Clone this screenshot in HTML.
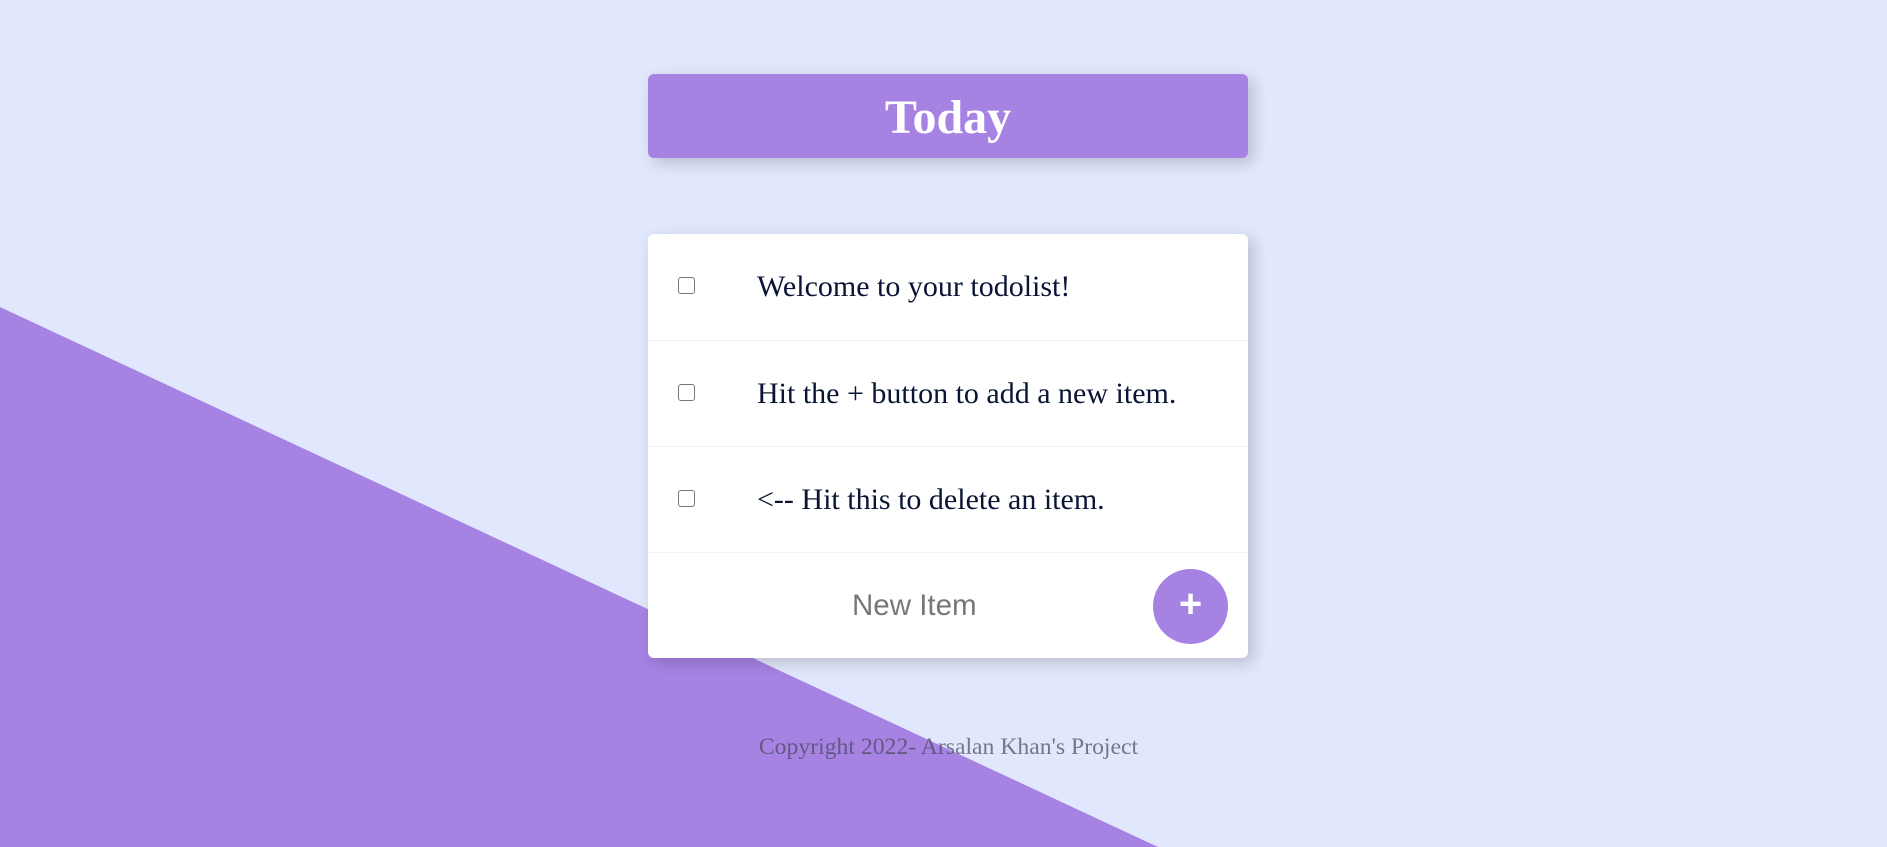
<!DOCTYPE html>
<html><head><style>
html,body{margin:0;padding:0;width:1887px;height:847px;overflow:hidden;background:#E1E7FC;position:relative;font-family:"Liberation Serif",serif}
.tri{position:absolute;left:0;top:0;width:1887px;height:847px}
.hdr{position:absolute;left:648px;top:74px;width:600px;height:84px;background:#A683E3;border-radius:6px;box-shadow:5px 5px 15px rgba(0,0,0,0.18);color:#fff;text-align:center;font-weight:bold;font-size:48px;line-height:88px}
.card{position:absolute;left:648px;top:234px;width:600px;height:424px;background:#fff;border-radius:6px;box-shadow:5px 5px 15px rgba(0,0,0,0.18)}
.row{position:relative;height:106px;border-bottom:1px solid #F1F1F1;box-sizing:border-box}
.cb{position:absolute;left:30px;top:43px;width:17px;height:17px;border:1.5px solid #767676;border-radius:3px;box-sizing:border-box}
.row p{position:absolute;left:109px;top:0;margin:0;line-height:106px;font-size:30px;color:#0a1535}
.row.first{height:107px}
.ni{position:absolute;left:204px;top:352px;font-family:"Liberation Sans",sans-serif;font-size:29.5px;color:#777;line-height:40px}
.btn{position:absolute;left:505px;top:335px;width:75px;height:75px;border-radius:50%;background:#A683E3;color:#fff;font-family:"Liberation Sans",sans-serif;font-size:40px;font-weight:bold;line-height:70px;text-align:center}
.ft{position:absolute;left:5px;width:1887px;top:732px;text-align:center;font-size:23.7px;color:rgba(70,70,90,0.7);line-height:30px}
</style></head><body>
<svg class="tri" viewBox="0 0 1887 847"><polygon points="0,307 1158,847 0,847" fill="#A683E3"/></svg>
<div class="hdr">Today</div>
<div class="card">
<div class="row first"><div class="cb"></div><p>Welcome to your todolist!</p></div>
<div class="row"><div class="cb"></div><p>Hit the + button to add a new item.</p></div>
<div class="row"><div class="cb"></div><p>&lt;-- Hit this to delete an item.</p></div>
<div class="ni">New Item</div>
<div class="btn">+</div>
</div>
<div class="ft">Copyright 2022- Arsalan Khan's Project</div>
</body></html>
